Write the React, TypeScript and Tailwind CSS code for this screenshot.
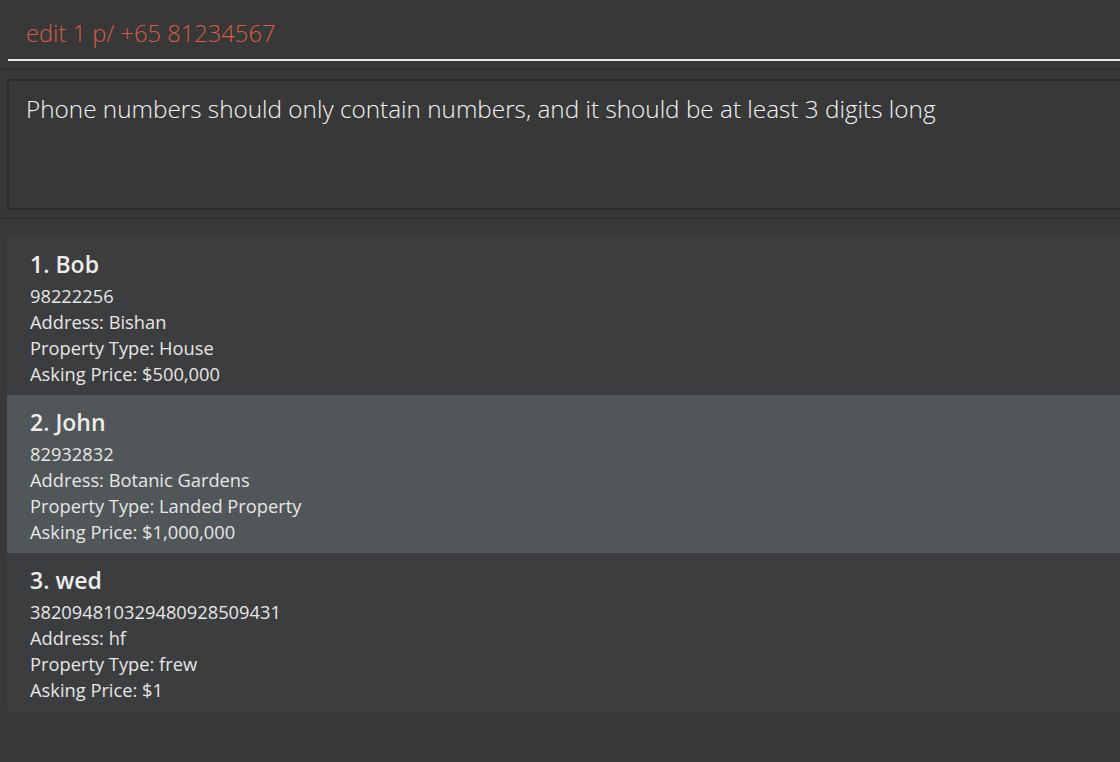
import React from 'react';

interface Person {
    name: string;
    phone: string;
    address: string;
    propertyType: string;
    price: string;
}

const persons: Person[] = [
    { name: 'Bob', phone: '98222256', address: 'Bishan', propertyType: 'House', price: '$500,000' },
    { name: 'John', phone: '82932832', address: 'Botanic Gardens', propertyType: 'Landed Property', price: '$1,000,000' },
    { name: 'wed', phone: '382094810329480928509431', address: 'hf', propertyType: 'frew', price: '$1' }
];

export default function App() {
    return (
        <div
            className="w-full h-[762px] bg-[#383838] overflow-hidden"
            style={{ fontFamily: '"Open Sans", "Noto Sans", sans-serif' }}
        >
            {/* Command box */}
            <div className="h-[61px] ml-[8px] border-b-2 border-[#e8e8e8] pl-[18px] pt-[17px]">
                <div className="text-[23.7px] leading-[32px] font-light text-[#d65c47]">edit 1 p/ +65 81234567</div>
            </div>

            {/* Result display */}
            <div className="mt-[7px] border-t-2 border-[#2e2e2e] pt-[9px]">
                <div className="ml-[7px] h-[131px] border-2 border-r-0 border-[#2c2c2c] pl-[17px] pt-[13px]">
                    <p className="text-[24.3px] leading-[30px] font-light text-[#f2f4f6]">
                        Phone numbers should only contain numbers, and it should be at least 3 digits long
                    </p>
                </div>
                <div className="mt-[7px] border-t-2 border-[#2e2e2e]" />
            </div>

            {/* Person list */}
            <div className="mt-[18px] ml-[7px] flex flex-col">
                {persons.map((p, i) => (
                    <div
                        key={p.name}
                        className={`h-[158px] pl-[23px] pt-[12px] text-[#e6e6e6] ${i % 2 === 1 ? 'bg-[#515658]' : 'bg-[#3c3d3f]'}`}
                    >
                        <div className="text-[23px] font-semibold text-[#ececec] leading-[30px]">
                            {i + 1}. {p.name}
                        </div>
                        <div className="mt-[4px] text-[18.3px] leading-[26px]">
                            <div>{p.phone}</div>
                            <div>Address: {p.address}</div>
                            <div>Property Type: {p.propertyType}</div>
                            <div>Asking Price: {p.price}</div>
                        </div>
                    </div>
                ))}
            </div>
        </div>
    );
}
